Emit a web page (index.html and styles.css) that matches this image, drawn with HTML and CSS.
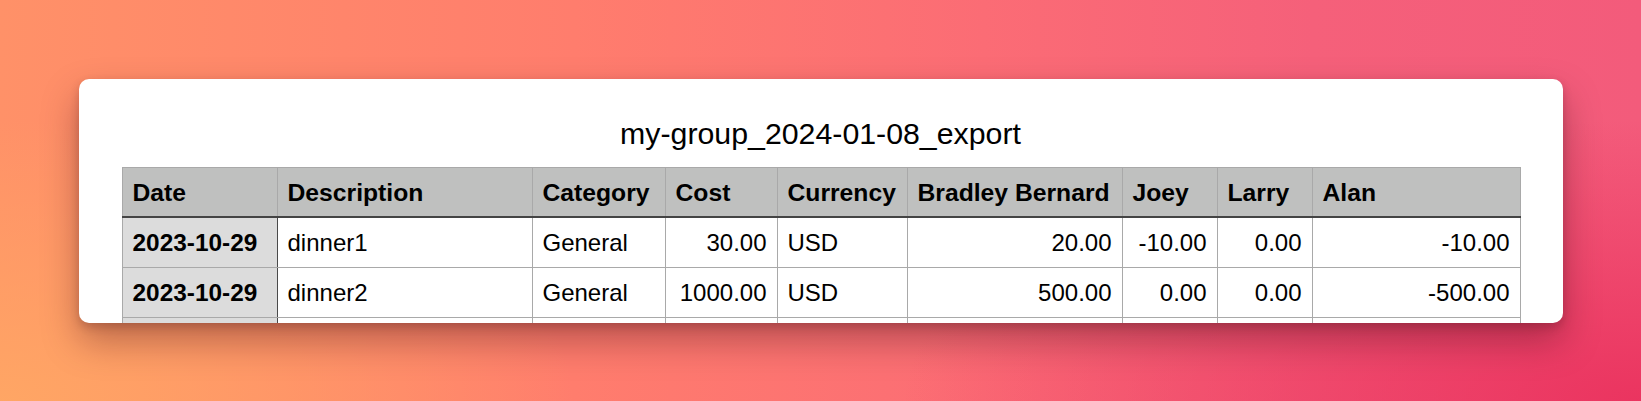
FILE: index.html
```html
<!DOCTYPE html>
<html lang="en">
<head>
<meta charset="utf-8">
<title>my-group_2024-01-08_export</title>
<link rel="stylesheet" href="styles.css">
</head>
<body>
<main class="stage">
  <section class="card">
    <h1 class="title">my-group_2024-01-08_export</h1>
    <table class="sheet">
      <colgroup>
        <col class="c-date"><col class="c-desc"><col class="c-cat"><col class="c-cost"><col class="c-cur"><col class="c-brad"><col class="c-joey"><col class="c-larry"><col class="c-alan">
      </colgroup>
      <thead>
        <tr>
          <th>Date</th><th>Description</th><th>Category</th><th>Cost</th><th>Currency</th><th>Bradley Bernard</th><th>Joey</th><th>Larry</th><th>Alan</th>
        </tr>
      </thead>
      <tbody>
        <tr>
          <th class="rowhead">2023-10-29</th><td>dinner1</td><td>General</td><td class="num">30.00</td><td>USD</td><td class="num">20.00</td><td class="num">-10.00</td><td class="num">0.00</td><td class="num">-10.00</td>
        </tr>
        <tr>
          <th class="rowhead">2023-10-29</th><td>dinner2</td><td>General</td><td class="num">1000.00</td><td>USD</td><td class="num">500.00</td><td class="num">0.00</td><td class="num">0.00</td><td class="num">-500.00</td>
        </tr>
        <tr>
          <th class="rowhead">&nbsp;</th><td>&nbsp;</td><td>&nbsp;</td><td>&nbsp;</td><td>&nbsp;</td><td>&nbsp;</td><td>&nbsp;</td><td>&nbsp;</td><td>&nbsp;</td>
        </tr>
      </tbody>
    </table>
  </section>
</main>
</body>
</html>
```

FILE: styles.css
```css
html, body {
  margin: 0;
  padding: 0;
}

body {
  font-family: "Liberation Sans", Arial, Helvetica, sans-serif;
  color: #000;
}

.stage {
  height: 100vh;
  display: flex;
  align-items: center;
  justify-content: center;
  background:
    radial-gradient(ellipse 45% 70% at 100% 100%, rgba(234, 50, 94, 0.95), rgba(234, 50, 94, 0) 100%),
    radial-gradient(ellipse 35% 70% at 0% 100%, rgba(255, 168, 100, 0.9), rgba(255, 168, 100, 0) 100%),
    linear-gradient(90deg, #ff9168 0%, #ff7d6d 35%, #fb6c75 60%, #f5607a 80%, #f35b7b 100%);
}

.card {
  width: 1484px;
  height: 244px;
  box-sizing: border-box;
  padding: 38px 43px 0;
  background: #fff;
  border-radius: 10px;
  overflow: hidden;
  box-shadow: 0 18px 36px rgba(60, 10, 20, 0.34), 0 4px 10px rgba(60, 10, 20, 0.2);
}

.title {
  margin: 0 0 16px;
  font-size: 30.3px;
  line-height: 34px;
  font-weight: normal;
  text-align: center;
}

.sheet {
  width: 1398px;
  table-layout: fixed;
  border-collapse: collapse;
  font-size: 24px;
  line-height: 29px;
}

.c-date { width: 155px; }
.c-desc { width: 255px; }
.c-cat { width: 133px; }
.c-cost { width: 112px; }
.c-cur { width: 130px; }
.c-brad { width: 215px; }
.c-joey { width: 95px; }
.c-larry { width: 95px; }
.c-alan { width: 208px; }

.sheet th,
.sheet td {
  border: 1px solid #a9a9a9;
  padding: 10px 10px;
  text-align: left;
  white-space: nowrap;
  overflow: hidden;
}

.sheet thead th {
  background: #bfc0bf;
  font-weight: bold;
  font-size: 24.7px;
  border-bottom: 2px solid #444;
  padding-top: 10px;
  padding-bottom: 9px;
}

.sheet .rowhead {
  background: #dcdcdc;
  font-weight: bold;
  font-size: 24.4px;
  border-right: 1px solid #4a4a4a;
}

.sheet .num {
  text-align: right;
}
```
